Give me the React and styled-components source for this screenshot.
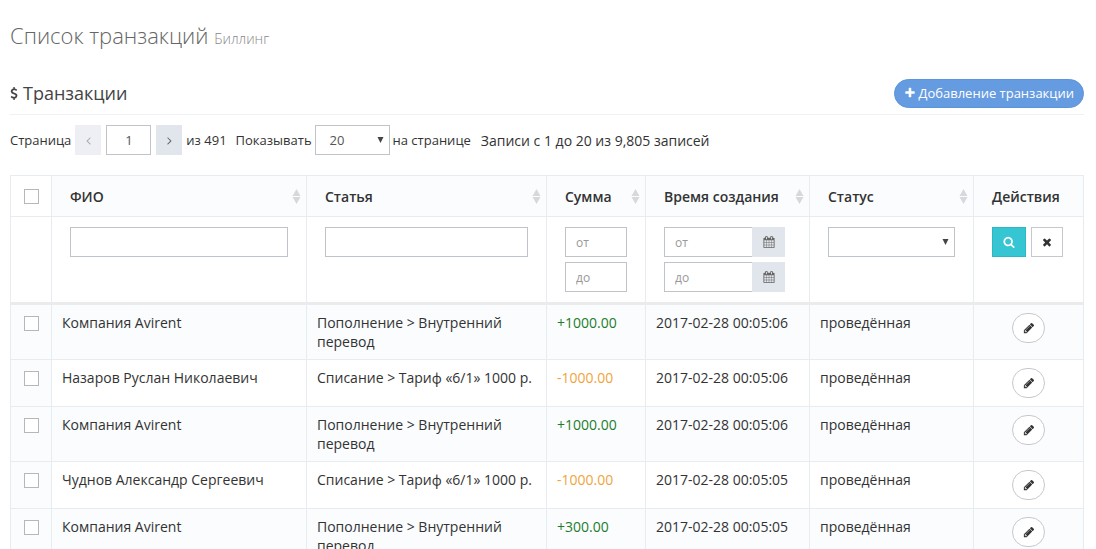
import React, { useState } from "react";
import styled, { createGlobalStyle } from "styled-components";

const GlobalStyle = createGlobalStyle`
  * {
    box-sizing: border-box;
  }
  body {
    margin: 0;
    background: #fff;
    color: #333;
    font-family: "Open Sans", sans-serif;
    font-size: 14px;
    line-height: 19px;
  }
  input, select, button {
    font-family: inherit;
    margin: 0;
  }
`;

const Page = styled.main`
  padding: 0 12px 0 10px;
`;
const PageTitle = styled.h1`
  margin: 0;
  padding: 20px 0 24px;
  font-size: 22px;
  font-weight: 300;
  line-height: 30px;
  color: #666;
  small {
    font-size: 14px;
    color: #888;
  }
`;
const PortletTitle = styled.div`
  display: flex;
  align-items: center;
  justify-content: space-between;
  min-height: 37px;
  padding-bottom: 6px;
  border-bottom: 1px solid #eef1f5;
`;
const Caption = styled.h2`
  display: flex;
  align-items: center;
  gap: 5px;
  margin: 0;
  font-size: 18px;
  font-weight: 400;
  line-height: 24px;
  color: #444;
`;
const AddButton = styled.button`
  display: flex;
  align-items: center;
  gap: 3px;
  height: 29px;
  padding: 0 9px;
  border: 1px solid #5c93da;
  border-radius: 25px;
  background: #659be0;
  color: #fff;
  font-size: 13px;
  line-height: 18px;
`;
const Svg = styled.svg`
  display: block;
  flex: none;
  fill: currentColor;
`;

const Toolbar = styled.div`
  display: flex;
  align-items: center;
  flex-wrap: wrap;
  gap: 4px;
  padding: 10px 0 20px;
  font-size: 13px;
`;
const ToolbarGroup = styled.div`
  display: flex;
  align-items: center;
  gap: ${(props) => props.$gap || 4}px;
  margin-right: ${(props) => props.$after || 0}px;
`;
const Info = styled.span`
  font-size: 14px;
`;
const PagerButton = styled.button`
  display: flex;
  align-items: center;
  justify-content: center;
  width: 26px;
  height: 30px;
  padding: 0;
  border: 0;
  background: #e1e5ec;
  color: #666;
  &:disabled {
    background: #edeff4;
    color: #aaa;
  }
`;
const Input = styled.input`
  display: block;
  width: ${(props) => props.$width || "100%"};
  min-width: 0;
  height: 30px;
  padding: 5px 10px;
  border: 1px solid #bfc4ca;
  border-radius: 0;
  background: #fff;
  color: #555;
  font-size: ${(props) => props.$size || 12}px;
  line-height: 18px;
  text-align: ${(props) => props.$align || "left"};
  &::placeholder {
    color: #999;
    opacity: 1;
  }
`;
const SelectWrap = styled.div`
  position: relative;
  width: ${(props) => props.$width || "100%"};
  color: #444;
  svg {
    position: absolute;
    right: 6px;
    top: 12px;
    pointer-events: none;
  }
`;
const Select = styled.select`
  display: block;
  width: 100%;
  height: 30px;
  padding: 0 20px 0 14px;
  appearance: none;
  border: 1px solid #bfc4ca;
  border-radius: 0;
  background: #fff;
  color: #555;
  font-size: 13px;
`;

const Table = styled.table`
  width: 100%;
  table-layout: fixed;
  border-collapse: collapse;
`;
const Col = styled.col`
  width: ${(props) => props.$width || "auto"};
`;
const HeadCell = styled.th`
  height: 41px;
  padding: 0 ${(props) => (props.$sortable ? 5 : 10)}px 0 18px;
  border: 1px solid #e7ecf1;
  background: #fafcfe;
  font-weight: 600;
  text-align: left;
  white-space: nowrap;
`;
const HeadInner = styled.div`
  display: flex;
  align-items: center;
  justify-content: space-between;
`;
const SortButton = styled.button`
  padding: 0;
  border: 0;
  background: none;
  color: #d6d8db;
`;
const CheckHead = styled.th`
  padding: 0;
  border: 1px solid #e7ecf1;
`;
const FilterCell = styled.td`
  padding: 10px 18px;
  border: 1px solid #e7ecf1;
  border-bottom: 3px solid #e9ebed;
  vertical-align: top;
`;
const Stack = styled.div`
  display: flex;
  flex-direction: column;
  gap: 5px;
`;
const DateGroup = styled.div`
  display: flex;
  width: 121px;
  input {
    flex: 1;
    border-right: 0;
  }
`;
const CalendarButton = styled.button`
  display: flex;
  align-items: center;
  justify-content: center;
  width: 33px;
  height: 30px;
  padding: 0;
  border: 0;
  background: #e1e5ec;
  color: #666;
`;
const FilterActions = styled.div`
  display: flex;
  gap: 5px;
`;
const FilterButton = styled.button`
  display: flex;
  align-items: center;
  justify-content: center;
  width: ${(props) => (props.$primary ? 34 : 32)}px;
  height: 30px;
  padding: 0;
  border: 1px solid ${(props) => (props.$primary ? "#2bb8c4" : "#c5c9ce")};
  background: ${(props) => (props.$primary ? "#36c6d3" : "#fff")};
  color: ${(props) => (props.$primary ? "#fff" : "#333")};
`;
const Row = styled.tr`
  background: #fff;
  &:nth-child(odd) {
    background: #fafcfe;
  }
`;
const Cell = styled.td`
  padding: 8px 10px;
  border: 1px solid #e7ecf1;
  vertical-align: top;
`;
const CheckCell = styled(Cell)`
  padding: 11px 0 0;
  background: #fafcfe;
`;
const Amount = styled.span`
  color: ${(props) => (props.$negative ? "#f0a43c" : "#1e7d2c")};
`;
const Checkbox = styled.input.attrs({ type: "checkbox" })`
  display: block;
  width: 15px;
  height: 15px;
  margin: 0 auto;
  appearance: none;
  border: 1px solid #b4b7bb;
  background: #fff;
  &:checked {
    background: #659be0;
  }
`;
const EditButton = styled.button`
  display: flex;
  align-items: center;
  justify-content: center;
  width: 33px;
  height: 30px;
  margin: 0 auto;
  padding: 0;
  border: 1px solid #c5c9ce;
  border-radius: 25px;
  background: #fff;
  color: #333;
`;

const ICONS = {
  dollar:
    "M1362 1185q0 153-99.5 263.5t-258.5 136.5v175q0 14-9 23t-23 9h-135q-13 0-22.5-9.5t-9.5-22.5v-175q-66-9-127.5-31t-101.5-44.5-74-48-46.5-37.5-17.5-18q-17-21-2-41l103-135q7-10 23-12 15-2 24 9l2 2q113 99 243 125 37 8 74 8 81 0 142.5-43t61.5-122q0-28-15-53t-33.5-42-58.5-37.5-66-32-80-32.5q-39-16-61.5-25t-61.5-26.5-62.5-31-56.5-35.5-53.5-42.5-43.5-49-35.5-58-21-66.5-8.500-78q0-138 98-242t255-134v-180q0-13 9.5-22.5t22.5-9.5h135q14 0 23 9t9 23v176q57 6 110.5 23t87 33.5 63.5 37.5 39 29 15 14q17 18 5 38l-81 146q-8 15-23 16-14 3-27-7-3-3-14.5-12t-39-26.5-58.5-32-74.5-26-85.5-11.5q-95 0-155 43t-60 111q0 26 8.5 48t29.5 41.5 39.5 33 56 31 60.5 27 70 27.5q53 20 81 31.5t76 35 75.5 42.5 62 50 53 63.5 31.5 76.5 13 94z",
  plus: "M1600 736v192q0 40-28 68t-68 28h-416v416q0 40-28 68t-68 28h-192q-40 0-68-28t-28-68v-416h-416q-40 0-68-28t-28-68v-192q0-40 28-68t68-28h416v-416q0-40 28-68t68-28h192q40 0 68 28t28 68v416h416q40 0 68 28t28 68z",
  left: "M1203 544q0 13-10 23l-393 393 393 393q10 10 10 23t-10 23l-50 50q-10 10-23 10t-23-10l-466-466q-10-10-10-23t10-23l466-466q10-10 23-10t23 10l50 50q10 10 10 23z",
  right:
    "M1171 960q0 13-10 23l-466 466q-10 10-23 10t-23-10l-50-50q-10-10-10-23t10-23l393-393-393-393q-10-10-10-23t10-23l50-50q10-10 23-10t23 10l466 466q10 10 10 23z",
  search:
    "M1216 832q0-185-131.5-316.5t-316.5-131.5-316.5 131.5-131.5 316.5 131.5 316.5 316.5 131.5 316.5-131.5 131.5-316.5zm512 832q0 52-38 90t-90 38q-54 0-90-38l-343-342q-179 124-399 124-143 0-273.5-55.5t-225-150-150-225-55.5-273.5 55.5-273.5 150-225 225-150 273.5-55.5 273.5 55.5 225 150 150 225 55.5 273.5q0 220-124 399l343 343q37 37 37 90z",
  times:
    "M1490 1322q0 40-28 68l-136 136q-28 28-68 28t-68-28l-294-294-294 294q-28 28-68 28t-68-28l-136-136q-28-28-28-68t28-68l294-294-294-294q-28-28-28-68t28-68l136-136q28-28 68-28t68 28l294 294 294-294q28-28 68-28t68 28l136 136q28 28 28 68t-28 68l-294 294 294 294q28 28 28 68z",
  pencil:
    "M491 1536l91-91-235-235-91 91v107h128v128h107zm523-928q0-22-22-22-10 0-17 7l-542 542q-7 7-7 17 0 22 22 22 10 0 17-7l542-542q7-7 7-17zm-54-192l416 416-832 832h-416v-416zm683 96q0 53-37 90l-166 166-416-416 166-165q36-38 90-38 53 0 91 38l235 234q37 39 37 91z",
  calendar:
    "M192 1664h288v-288h-288v288zm352 0h320v-288h-320v288zm-352-352h288v-320h-288v320zm352 0h320v-320h-320v320zm-352-384h288v-288h-288v288zm736 736h320v-288h-320v288zm-384-736h320v-288h-320v288zm768 736h288v-288h-288v288zm-384-352h320v-320h-320v320zm-352-864v-288q0-13-9.5-22.5t-22.5-9.5h-64q-13 0-22.5 9.5t-9.5 22.5v288q0 13 9.5 22.5t22.5 9.5h64q13 0 22.5-9.5t9.5-22.5zm736 864h288v-320h-288v320zm-384-384h320v-288h-320v288zm384 0h288v-288h-288v288zm32-480v-288q0-13-9.5-22.5t-22.5-9.5h-64q-13 0-22.5 9.5t-9.5 22.5v288q0 13 9.5 22.5t22.5 9.5h64q13 0 22.5-9.5t9.5-22.5zm384-64v1280q0 52-38 90t-90 38h-1408q-52 0-90-38t-38-90v-1280q0-52 38-90t90-38h128v-96q0-66 47-113t113-47h64q66 0 113 47t47 113v96h384v-96q0-66 47-113t113-47h64q66 0 113 47t47 113v96h128q52 0 90 38t38 90z",
};

function Icon({ name, size = 14, box = "0 0 1792 1792", width }) {
  return (
    <Svg width={width || size} height={size} viewBox={box} aria-hidden="true">
      <path d={ICONS[name]} />
    </Svg>
  );
}

function Arrow() {
  return (
    <Svg width="7" height="6" viewBox="0 0 7 6" aria-hidden="true">
      <path d="M0.500 0h6L3.500 6z" />
    </Svg>
  );
}

function SortHead({ children }) {
  return (
    <HeadCell $sortable>
      <HeadInner>
        {children}
        <SortButton aria-label={`Сортировать: ${children}`}>
          <Svg width="9" height="15" viewBox="0 0 9 15" aria-hidden="true">
            <path d="M4.500 0L8.500 7h-8zM0.500 8h8l-4 7z" />
          </Svg>
        </SortButton>
      </HeadInner>
    </HeadCell>
  );
}

function DateField({ label, placeholder }) {
  return (
    <DateGroup>
      <Input aria-label={label} placeholder={placeholder} />
      <CalendarButton aria-label="Открыть календарь">
        <Icon name="calendar" size={12} />
      </CalendarButton>
    </DateGroup>
  );
}

const transfer = "Пополнение > Внутренний перевод";
const tariff = "Списание > Тариф «6/1» 1000 р.";
const rows = [
  { name: "Компания Avirent", item: transfer, sum: "+1000.00", time: "2017-02-28 00:05:06" },
  { name: "Назаров Руслан Николаевич", item: tariff, sum: "-1000.00", time: "2017-02-28 00:05:06" },
  { name: "Компания Avirent", item: transfer, sum: "+1000.00", time: "2017-02-28 00:05:06" },
  { name: "Чуднов Александр Сергеевич", item: tariff, sum: "-1000.00", time: "2017-02-28 00:05:05" },
  { name: "Компания Avirent", item: transfer, sum: "+300.00", time: "2017-02-28 00:05:05" },
];

export default function App() {
  const [page, setPage] = useState(1);
  return (
    <>
      <GlobalStyle />
      <Page>
        <PageTitle>
          Список транзакций <small>Биллинг</small>
        </PageTitle>
        <PortletTitle>
          <Caption>
            <Icon name="dollar" size={13} width={8} box="384 0 1024 1792" />
            Транзакции
          </Caption>
          <AddButton>
            <Icon name="plus" size={12} />
            Добавление транзакции
          </AddButton>
        </PortletTitle>

        <Toolbar>
          <ToolbarGroup $after={5}>
            <label htmlFor="page">Страница</label>
            <ToolbarGroup $gap={5}>
              <PagerButton
                aria-label="Предыдущая"
                disabled={page === 1}
                onClick={() => setPage(page - 1)}
              >
                <Icon name="left" size={13} />
              </PagerButton>
              <Input
                id="page"
                $width="45px"
                $size={13}
                $align="center"
                value={page}
                onChange={(e) => setPage(Number(e.target.value) || 1)}
              />
              <PagerButton aria-label="Следующая" onClick={() => setPage(page + 1)}>
                <Icon name="right" size={13} />
              </PagerButton>
            </ToolbarGroup>
            <span>из 491</span>
          </ToolbarGroup>
          <ToolbarGroup $gap={3} $after={6}>
            <label htmlFor="length">Показывать</label>
            <SelectWrap $width="75px">
              <Select id="length" defaultValue="20">
                <option>20</option>
                <option>50</option>
                <option>100</option>
              </Select>
              <Arrow />
            </SelectWrap>
            <span>на странице</span>
          </ToolbarGroup>
          <Info>Записи с 1 до 20 из 9,805 записей</Info>
        </Toolbar>

        <Table>
          <colgroup>
            <Col $width="41px" />
            <Col />
            <Col $width="240px" />
            <Col $width="99px" />
            <Col $width="164px" />
            <Col $width="164px" />
            <Col $width="110px" />
          </colgroup>
          <thead>
            <tr>
              <CheckHead>
                <Checkbox aria-label="Выбрать все" />
              </CheckHead>
              <SortHead>ФИО</SortHead>
              <SortHead>Статья</SortHead>
              <SortHead>Сумма</SortHead>
              <SortHead>Время создания</SortHead>
              <SortHead>Статус</SortHead>
              <HeadCell>Действия</HeadCell>
            </tr>
            <tr>
              <FilterCell />
              <FilterCell>
                <Input aria-label="ФИО" />
              </FilterCell>
              <FilterCell>
                <Input aria-label="Статья" />
              </FilterCell>
              <FilterCell>
                <Stack>
                  <Input aria-label="Сумма от" placeholder="от" />
                  <Input aria-label="Сумма до" placeholder="до" />
                </Stack>
              </FilterCell>
              <FilterCell>
                <Stack>
                  <DateField label="Время создания от" placeholder="от" />
                  <DateField label="Время создания до" placeholder="до" />
                </Stack>
              </FilterCell>
              <FilterCell>
                <SelectWrap>
                  <Select aria-label="Статус" defaultValue="">
                    <option value=""></option>
                    <option>проведённая</option>
                  </Select>
                  <Arrow />
                </SelectWrap>
              </FilterCell>
              <FilterCell>
                <FilterActions>
                  <FilterButton $primary aria-label="Найти">
                    <Icon name="search" size={12} />
                  </FilterButton>
                  <FilterButton aria-label="Сбросить">
                    <Icon name="times" size={12} />
                  </FilterButton>
                </FilterActions>
              </FilterCell>
            </tr>
          </thead>
          <tbody>
            {rows.map((row, i) => (
              <Row key={i}>
                <CheckCell>
                  <Checkbox aria-label={`Выбрать: ${row.name}`} />
                </CheckCell>
                <Cell>{row.name}</Cell>
                <Cell>{row.item}</Cell>
                <Cell>
                  <Amount $negative={row.sum.startsWith("-")}>{row.sum}</Amount>
                </Cell>
                <Cell>{row.time}</Cell>
                <Cell>проведённая</Cell>
                <Cell>
                  <EditButton aria-label="Редактировать">
                    <Icon name="pencil" size={12} />
                  </EditButton>
                </Cell>
              </Row>
            ))}
          </tbody>
        </Table>
      </Page>
    </>
  );
}
